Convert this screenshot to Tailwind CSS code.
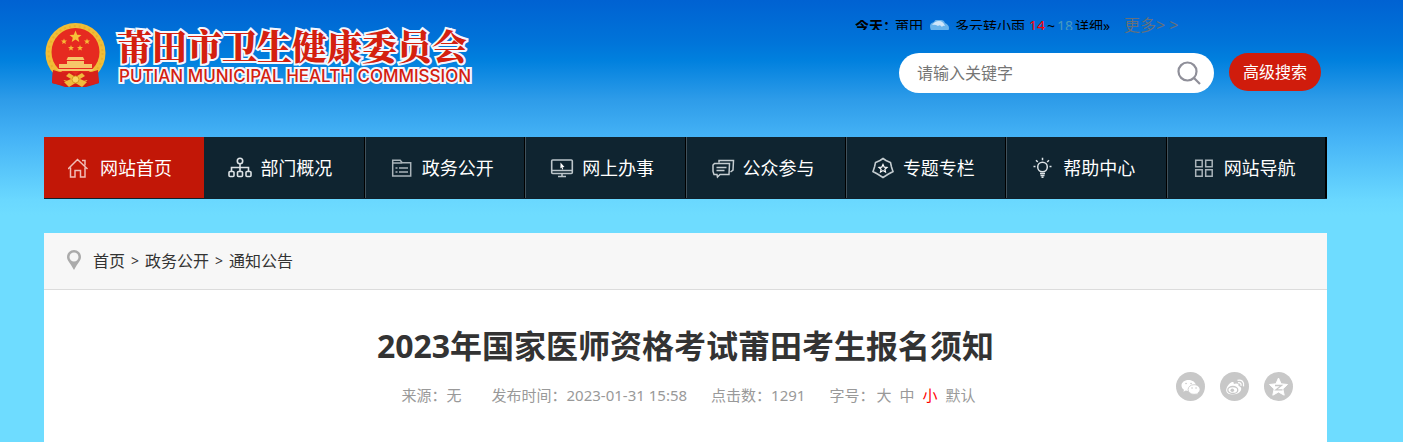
<!DOCTYPE html>
<html lang="zh-CN">
  <head>
    <meta charset="UTF-8" />
    <meta name="viewport" content="width=device-width, initial-scale=1.0" />
    <script src="https://cdn.jsdelivr.net/npm/@tailwindcss/browser@4"></script>
    <title>莆田市卫生健康委员会</title>
  </head>
  <body
    class="min-h-screen flex flex-col pr-8 text-[#333] font-['Noto_Sans','Noto_Sans_CJK_SC',sans-serif] bg-[#6edcff] bg-[linear-gradient(#0062d2,#0074d9_42px,#0080de_60px,#2e9ce9_100px,#45b3f6_138px,#6ad8ff_200px,#6edcff_215px)] bg-no-repeat"
  >
    <div class="w-full max-w-[1283px] mx-auto flex-1 flex flex-col">
      <header class="h-[137px] flex justify-between items-start">
        <!-- logo -->
        <a href="#" class="flex gap-2.5 pt-[22px]">
          <svg class="w-[63px] h-[66px] shrink-0" viewBox="0 0 63 66">
            <path d="M9 47 L8 61 L15 63 L21 65 H42 L49 63 L55 61 L53 47 Z" fill="#cf1d18" />
            <circle cx="31.500" cy="31" r="30" fill="#f1bd36" />
            <circle cx="31.500" cy="31" r="27" fill="none" stroke="#e8b02e" stroke-width="2" stroke-dasharray="2 3" />
            <circle cx="31.500" cy="30" r="24" fill="#e62a20" />
            <path d="M31.500 8.500 L33.200 12.800 L37.500 13 L34.200 15.800 L35.300 20 L31.500 17.600 L27.700 20 L28.800 15.800 L25.500 13 L29.800 12.800 Z" fill="#f7c238" />
            <path d="M20 16.500l.8 2 2.200.1-1.700 1.400.6 2.100-1.900-1.200-1.900 1.200.6-2.100-1.700-1.400 2.200-.1zM43 16.500l.8 2 2.200.1-1.700 1.400.6 2.100-1.900-1.200-1.900 1.200.6-2.100-1.700-1.400 2.200-.1zM27 23l.8 2 2.200.1-1.700 1.400.6 2.100-1.900-1.200-1.900 1.200.6-2.100-1.700-1.400 2.200-.1zM36 23l.8 2 2.200.1-1.700 1.400.6 2.100-1.900-1.200-1.900 1.200.6-2.100-1.700-1.400 2.200-.1z" fill="#f7b936" />
            <path d="M24 35h15l1.500 3h-18zM23 39h17v3h8v4H15v-4h8zM13 47h37l-2 2H15z" fill="#f6c66a" />
            <path d="M9 48 Q20 52 27 49 L31.500 53 L36 49 Q43 52 54 48 L55 61 L46 63 L43 58 L36 60 L31.500 57 L27 60 L20 58 L17 63 L8 61 Z" fill="#d6201a" />
            <path d="M25 51 L31.500 55 L38 51 L41 54 L36 57 L43 60 L38 65 L31.500 61 L25 65 L20 60 L27 57 L22 54 Z" fill="#f2ba3c" />
            <circle cx="31.500" cy="57.500" r="3.500" fill="#f9d45e" stroke="#d99a20" />
          </svg>
          <span class="flex flex-col text-[#d4200f] whitespace-nowrap [-webkit-text-stroke:4px_#f4f8fd] [paint-order:stroke_fill]">
            <span class="text-[35px] leading-[46px] font-black font-['Noto_Serif_CJK_SC','Noto_Sans_CJK_SC',serif]">莆田市卫生健康委员会</span>
            <span class="pl-0.5 text-[17px] leading-4 font-medium font-[Inter,sans-serif]">PUTIAN MUNICIPAL HEALTH COMMISSION</span>
          </span>
        </a>

        <!-- weather and search -->
        <div class="w-[472px] pt-4 pr-1.5">
          <div class="flex items-start h-[37px] text-sm text-black">
            <div class="mt-1 h-[10px] w-[269px] overflow-hidden">
              <div class="-mt-1 h-5 flex items-center leading-5 whitespace-nowrap">
                <b>今天：</b><span class="-ml-0.5">莆田</span>
                <svg class="w-5 h-5 ml-1.5 mr-1.5" viewBox="0 0 20 20">
                  <path d="M1 10q0-3 4-4q2-4 7-2q3 0 4 3q4 2 4 5q0 4-5 4H6q-5 0-5-6z" fill="#69b4ec" />
                  <path d="M3 9q3-4 7-4q4 0 6 5q-2-1-3 1q-2-3-4-1q-3-2-6-1z" fill="#cfe6fa" />
                </svg>
                <a href="#">多云转小雨</a>
                <span class="ml-1 text-[#f00]">14</span><span class="mx-0.5">~</span><span class="text-[#4899be]">18</span>
                <a href="#" class="ml-0.5">详细»</a>
              </div>
            </div>
            <a href="#" class="text-base leading-[18px] text-[#66707c]">更多&gt; &gt;</a>
          </div>
          <form class="flex items-start justify-end gap-[15px]">
            <div class="flex items-center w-[315px] h-10 pl-[18px] pr-[13px] rounded-full bg-white">
              <input type="text" aria-label="请输入关键字" placeholder="请输入关键字" class="flex-1 min-w-0 text-base text-[#333] placeholder:text-[#757575] outline-none" />
              <button type="button" aria-label="搜索">
                <svg class="w-6 h-6 block" viewBox="0 0 24 24" fill="none" stroke="#8f8f99" stroke-width="2.200">
                  <circle cx="10.500" cy="10.500" r="9" />
                  <path d="M17 17l6 6" />
                </svg>
              </button>
            </div>
            <button type="button" class="w-[92px] h-[38px] rounded-full bg-[#d01c0c] text-base text-white">高级搜索</button>
          </form>
        </div>
      </header>

      <nav class="grid grid-cols-8 h-[62px] bg-[#0f2430] border-b border-[#10212c] text-lg text-white [&_a]:flex [&_a]:items-center [&_a]:gap-2 [&_a]:pl-6 [&_a]:whitespace-nowrap [&_svg]:w-6 [&_svg]:h-6 [&_svg]:shrink-0">
        <a href="#" class="bg-[#c21707]">
          <svg viewBox="0 0 24 24" fill="none" stroke="#f1bdb7" stroke-width="1.500">
            <path d="M0 13L9.500 3.500L19.500 13M14 4.500h3v5M2.500 11.500v9.500h4.500v-6.500h5.500v6.500h4.500v-9.500" />
          </svg>
          网站首页
        </a>
        <a href="#" class="border-r border-black">
          <svg viewBox="0 0 24 24" fill="none" stroke="#dce2e5" stroke-width="1.600">
            <circle cx="12" cy="5" r="2.700" />
            <path d="M12 8v7M3.500 15v-3.500h17V15" />
            <rect x="1" y="15.500" width="5" height="5" rx="1" />
            <rect x="9.500" y="15.500" width="5" height="5" rx="1" />
            <rect x="18" y="15.500" width="5" height="5" rx="1" />
          </svg>
          部门概况
        </a>
        <a href="#" class="border-r border-black border-l border-l-[#40515b]">
          <svg viewBox="0 0 24 24" fill="none" stroke="#a9b3b9" stroke-width="1.500">
            <path d="M2.700 20V4.200h7.500l2 2.500h8.500V20zM2.700 7h9.500M5.500 12h2M5.500 16h2M9 12h9M9 16h9" />
          </svg>
          政务公开
        </a>
        <a href="#" class="border-r border-black border-l border-l-[#40515b]">
          <svg viewBox="0 0 24 24" fill="none" stroke="#bcc5ca" stroke-width="1.600">
            <rect x="1.700" y="4" width="20.600" height="13.500" rx="1" />
            <path d="M2 14.500h20M12 17.500v3M8 20.500h8" />
            <path d="M10.500 6.500l4 4.500-2 .2.800 2-1 .3-.9-2-1 1z" fill="#fff" stroke="none" />
          </svg>
          网上办事
        </a>
        <a href="#" class="border-r border-black border-l border-l-[#40515b]">
          <svg viewBox="0 0 24 24" fill="none" stroke="#c5cdd1" stroke-width="1.500">
            <path d="M8 6.500V4.500h14.500l-.5 9.500-2.500 2M3.500 7.500h15l-.5 11h-9l-2.500 2.500-.5-2.500h-3L2 15.500V9zM5.500 11.500h10M5.500 14.500h8" />
          </svg>
          公众参与
        </a>
        <a href="#" class="border-r border-black border-l border-l-[#40515b]">
          <svg viewBox="0 0 24 24" fill="none" stroke="#c5cdd1" stroke-width="1.600">
            <path d="M12 2.500l3 2 4.500 2 1 4.500 1.500 4.500-4.500 2.500-5.500 3.500-5.500-3.500L2 15.500 3.500 11l1-4.500 4.500-2z" />
            <path d="M12 8.500l1.200 2.600 2.800.3-2.100 1.900.6 2.700-2.500-1.400L9.500 16l.6-2.700L8 11.400l2.800-.3z" stroke="#fff" stroke-width="1.200" />
          </svg>
          专题专栏
        </a>
        <a href="#" class="border-r border-black border-l border-l-[#40515b]">
          <svg viewBox="0 0 24 24" fill="none" stroke="#dce2e5" stroke-width="1.500">
            <circle cx="11.500" cy="11" r="4.800" />
            <path d="M9 17.500h5M9.500 19.500h4M10.500 21.300h2M11.500 1.700v2.500M5 4.200l1.800 1.800M18 4.200l-1.800 1.800M2.500 10.500h2M18.500 10.500h2" />
          </svg>
          帮助中心
        </a>
        <a href="#" class="border-r-2 border-black border-l border-l-[#40515b]">
          <svg viewBox="0 0 24 24" fill="none" stroke="#a9b3b9" stroke-width="1.500">
            <path d="M3.700 4.200h6.500v6.500H3.700zM13.700 4.200h6.500v6.500h-6.500zM3.700 13.700h6.500v6.500H3.700zM13.700 13.700h6.500v6.500h-6.500z" />
          </svg>
          网站导航
        </a>
      </nav>

      <main class="mt-[34px] flex-1 bg-white">
        <div class="flex items-center gap-1.5 h-[57px] pl-[23px] bg-[#f7f7f7] border-b border-[#dcdcdc] text-base">
          <svg class="w-[14px] h-5 mr-1.5 mb-0.5" viewBox="0 0 14 20">
            <path d="M7 0a7 7 0 0 0-7 7c0 3.500 3 5.500 7 13c4-7.500 7-9.500 7-13a7 7 0 0 0-7-7zm0 2.500a4.500 4.500 0 1 0 0 9a4.500 4.500 0 0 0 0-9z" fill="#ababab" fill-rule="evenodd" />
          </svg>
          <a href="#">首页</a>
          <span class="text-sm">&gt;</span>
          <a href="#">政务公开</a>
          <span class="text-sm">&gt;</span>
          <a href="#">通知公告</a>
        </div>

        <article class="pt-8 pb-10">
          <h1 class="text-[32px] leading-[48px] font-bold text-center">2023年国家医师资格考试莆田考生报名须知</h1>
          <div class="mt-0.5 px-[34px] grid grid-cols-[1fr_auto_1fr]">
            <div class="col-start-2 flex pt-3 pl-1.5 text-[15px] leading-[22px] text-[#999] whitespace-nowrap">
              <span class="mr-[30px]">来源：无</span>
              <span class="mr-6">发布时间：2023-01-31 15:58</span>
              <span class="mr-6">点击数：1291</span>
              <span class="mr-0.5">字号：</span>
              <span class="flex gap-2">
                <a href="#">大</a>
                <a href="#">中</a>
                <a href="#" class="text-[#f00]">小</a>
                <a href="#">默认</a>
              </span>
            </div>
            <div class="justify-self-end flex gap-[15px]">
              <a href="#" aria-label="微信">
                <svg class="w-[29px] h-[29px]" viewBox="0 0 29 29">
                  <circle cx="14.500" cy="14.500" r="14.500" fill="#c8c8c8" />
                  <path d="M12.500 8c-4 0-7 2.400-7 5.500c0 1.800 1 3.300 2.500 4.300l-.6 2 2.400-1.200c4 1.200 10-1 10-5.100c0-3.100-3.300-5.500-7.300-5.500z" fill="#fff" />
                  <path d="M18 12.700c-3.300 0-5.900 2.100-5.900 4.800s2.600 4.800 5.900 4.800c.8 0 1.600-.1 2.200-.4l2 1-.5-1.800c1.400-.9 2.300-2.200 2.300-3.600c0-2.700-2.700-4.800-6-4.800z" fill="#fff" stroke="#c8c8c8" stroke-width=".8" />
                  <path d="M10 11.500h.1M15 11.500h.1M16 16h.1M20 16h.1" stroke="#c8c8c8" stroke-width="1.500" stroke-linecap="round" />
                </svg>
              </a>
              <a href="#" aria-label="微博">
                <svg class="w-[29px] h-[29px]" viewBox="0 0 29 29" fill="none">
                  <circle cx="14.500" cy="14.500" r="14.500" fill="#c8c8c8" />
                  <path d="M12 10c2-.5 2 .7 1.700 2c2.300-1 5.600-.8 4.800 2c4 1 3 4.500 1 6.200c-3.500 3-12.500 3.400-13.300-1.200C5.800 15.500 9.500 10.700 12 10z" fill="#fff" />
                  <ellipse cx="12.800" cy="18" rx="5" ry="3.500" stroke="#c8c8c8" stroke-width="1.300" />
                  <circle cx="12.300" cy="18.300" r="1.800" fill="#c8c8c8" />
                  <path d="M17.500 8.300c4-1 7 1.700 6 6M18 10.800c2-.4 3.500.8 3 3" stroke="#fff" stroke-width="1.300" />
                </svg>
              </a>
              <a href="#" aria-label="QQ空间">
                <svg class="w-[29px] h-[29px]" viewBox="0 0 29 29" fill="none">
                  <circle cx="14.500" cy="14.500" r="14.500" fill="#c8c8c8" />
                  <path d="M14.500 6l2.600 5.800 6.400.7-4.700 4.400 1.400 6.300-5.700-3.200-5.700 3.200 1.400-6.300-4.700-4.400 6.400-.7z" fill="#fff" stroke="#fff" stroke-linejoin="round" />
                  <path d="M11 13.500h6.500L12 17.800h6.500" stroke="#c8c8c8" stroke-width="1.300" />
                </svg>
              </a>
            </div>
          </div>
        </article>
      </main>
    </div>
  </body>
</html>
